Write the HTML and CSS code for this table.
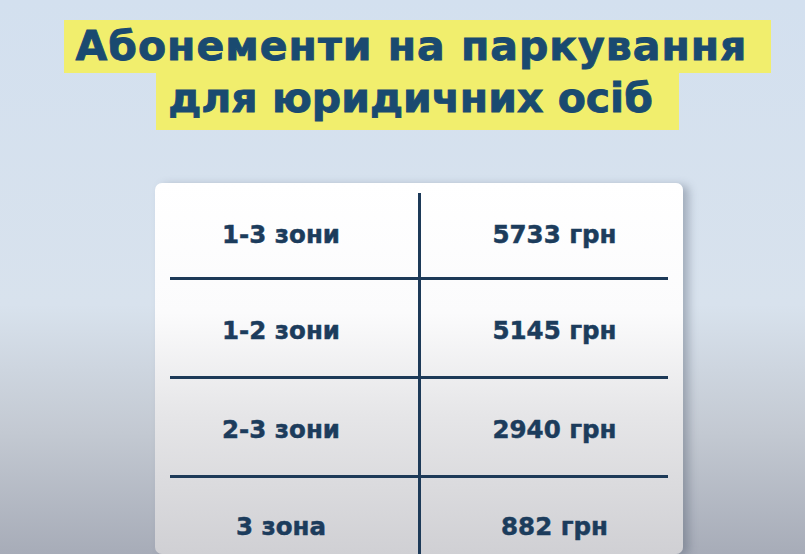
FILE: index.html
```html
<!DOCTYPE html>
<html lang="uk">
<head>
<meta charset="utf-8">
<title>Абонементи на паркування</title>
<link rel="stylesheet" href="styles.css">
</head>
<body>
<div class="page">
  <h1 class="title">
    <span class="hl hl-1">Абонементи на паркування</span>
    <span class="hl hl-2">для юридичних осіб</span>
  </h1>
  <div class="card">
    <div class="grid">
      <div class="cell left first">1-3 зони</div>
      <div class="cell right first">5733 грн</div>
      <div class="cell left">1-2 зони</div>
      <div class="cell right">5145 грн</div>
      <div class="cell left">2-3 зони</div>
      <div class="cell right">2940 грн</div>
      <div class="cell left last">3 зона</div>
      <div class="cell right last">882 грн</div>
    </div>
  </div>
</div>
</body>
</html>
```

FILE: styles.css
```css
html, body {
  margin: 0;
  padding: 0;
}
*, *::before, *::after {
  box-sizing: border-box;
}
body {
  width: 805px;
  height: 554px;
  overflow: hidden;
  font-family: "DejaVu Sans", "Liberation Sans", sans-serif;
  background: linear-gradient(180deg, #d3e0ef 0%, #d8e2ed 55%, #c3c9d2 78%, #a7acb8 100%);
}
.page {
  padding-top: 20px;
}
.title {
  margin: 0;
  padding-left: 30px;
  display: flex;
  flex-direction: column;
  align-items: center;
  font-weight: 700;
  font-size: 41px;
  color: #1a4a70;
  -webkit-text-stroke: 0.9px #1a4a70;
}
.hl {
  display: block;
  background: #f1ee6d;
  padding: 0 24px 0 12px;
  white-space: nowrap;
}
.hl-1 {
  height: 53px;
  line-height: 53px;
  letter-spacing: 1px;
}
.hl-2 {
  height: 57px;
  line-height: 50px;
  letter-spacing: 0;
  padding-right: 26px;
}
.card {
  margin-top: 53px;
  margin-left: 155px;
  width: 528px;
  height: 371px;
  padding: 10px 15px 0 15px;
  border-radius: 7px;
  background: linear-gradient(180deg, #ffffff 0%, #fbfbfc 35%, #e6e6e8 62%, #d0d0d4 100%);
  box-shadow: 6px 2px 8px rgba(70, 80, 100, 0.35);
}
.grid {
  display: grid;
  grid-template-columns: 251px 247px;
  grid-template-rows: 87px 99px 99px 76px;
}
.cell {
  display: flex;
  align-items: center;
  justify-content: center;
  font-weight: 700;
  font-size: 24.5px;
  color: #1c3c5c;
  -webkit-text-stroke: 0.5px #1c3c5c;
  border-bottom: 3px solid #1d3a58;
  padding-top: 4px;
}
.cell.first {
  padding-top: 0;
  padding-bottom: 2px;
}
.cell.last {
  border-bottom: none;
  align-items: flex-start;
  padding-top: 34px;
}
.left {
  border-right: 3px solid #1d3a58;
  padding-right: 26px;
}
.right {
  padding-left: 20px;
}
```
